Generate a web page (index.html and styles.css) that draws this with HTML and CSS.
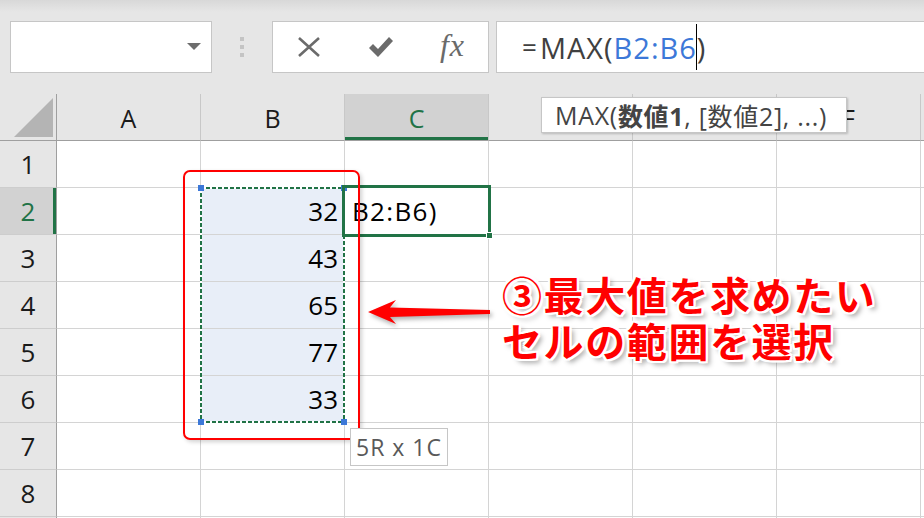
FILE: index.html
```html
<!DOCTYPE html>
<html lang="ja">
<head>
<meta charset="utf-8">
<link rel="stylesheet" href="styles.css">
</head>
<body>
<div class="toolbar">
  <div class="namebox"><span class="dd"></span></div>
  <div class="grip"><span></span><span></span><span></span></div>
  <div class="btns">
    <span class="btn"><svg width="24" height="20" viewBox="0 0 24 20"><path d="M2 1 L22 19 M22 1 L2 19" stroke="#6b6b6b" stroke-width="2.6" fill="none"/></svg></span>
    <span class="btn"><svg width="26" height="22" viewBox="0 0 26 22"><path d="M1 12 L5 8 L10 13 L21 1 L25 5 L10 21 Z" fill="#6b6b6b"/></svg></span>
    <span class="btn fx">fx</span>
  </div>
  <div class="formula"><span class="eq">=</span>MAX(<span class="ref">B2:B6</span><span class="caret"></span>)</div>
</div>

<div class="sheet">
  <div class="grid">
    <div class="corner"><span class="tri"></span></div>
    <div class="ch">A</div><div class="ch">B</div><div class="ch on">C</div><div class="ch">D</div><div class="ch">E</div><div class="ch">F</div><div class="ch last"></div>

    <div class="rh">1</div><div class="c"></div><div class="c"></div><div class="c"></div><div class="c"></div><div class="c"></div><div class="c"></div><div class="c last"></div>
    <div class="rh on">2</div><div class="c"></div><div class="c sel">32</div><div class="c txt">B2:B6)</div><div class="c"></div><div class="c"></div><div class="c"></div><div class="c last"></div>
    <div class="rh">3</div><div class="c"></div><div class="c sel">43</div><div class="c"></div><div class="c"></div><div class="c"></div><div class="c"></div><div class="c last"></div>
    <div class="rh">4</div><div class="c"></div><div class="c sel">65</div><div class="c"></div><div class="c"></div><div class="c"></div><div class="c"></div><div class="c last"></div>
    <div class="rh">5</div><div class="c"></div><div class="c sel">77</div><div class="c"></div><div class="c"></div><div class="c"></div><div class="c"></div><div class="c last"></div>
    <div class="rh">6</div><div class="c"></div><div class="c sel">33</div><div class="c"></div><div class="c"></div><div class="c"></div><div class="c"></div><div class="c last"></div>
    <div class="rh">7</div><div class="c"></div><div class="c"></div><div class="c"></div><div class="c"></div><div class="c"></div><div class="c"></div><div class="c last"></div>
    <div class="rh">8</div><div class="c"></div><div class="c"></div><div class="c"></div><div class="c"></div><div class="c"></div><div class="c"></div><div class="c last"></div>
    <div class="rh"></div><div class="c"></div><div class="c"></div><div class="c"></div><div class="c"></div><div class="c"></div><div class="c"></div><div class="c last"></div>
  </div>

  <div class="selbox"><i class="h tl"></i><i class="h tr"></i><i class="h bl"></i><i class="h br"></i></div>
  <div class="active"><i class="fill"></i></div>
  <div class="redbox"></div>
  <svg class="arrow" width="130" height="36" viewBox="362 296 130 36">
    <path d="M368 312 L396 300 L390 307.5 L490 310 L490 314 L390 317 L396 324 Z" fill="#ff0000"/>
  </svg>
  <div class="note">③最大値を求めたい<br>セルの範囲を選択</div>
  <div class="tip">MAX(<b>数値1</b>, [数値2], ...)</div>
  <div class="size">5R x 1C</div>
</div>
</body>
</html>
```

FILE: styles.css
```css
* { box-sizing: border-box; }
html, body { margin: 0; padding: 0; }
body {
  width: 924px;
  height: 518px;
  overflow: hidden;
  background: #e6e6e6;
  font-family: "Open Sans", "Noto Sans CJK JP", sans-serif;
  color: #000;
}

.toolbar {
  height: 94px;
  display: flex;
  align-items: flex-start;
  padding: 21px 0 0 10px;
  background: linear-gradient(#d8d8d8 0, #e6e6e6 12px, #e6e6e6 100%);
}
.namebox {
  width: 202px;
  height: 52px;
  background: #fff;
  border: 1px solid #c6c6c6;
  display: flex;
  justify-content: flex-end;
  align-items: center;
  padding-right: 10px;
}
.dd {
  width: 0; height: 0;
  border-left: 7px solid transparent;
  border-right: 7px solid transparent;
  border-top: 7px solid #6d6d6d;
  margin-top: -2px;
}
.grip {
  width: 60px;
  height: 52px;
  display: flex;
  flex-direction: column;
  align-items: center;
  justify-content: center;
  gap: 4px;
}
.grip span { width: 4px; height: 4px; background: #c4c4c4; }
.btns {
  width: 217px;
  height: 52px;
  background: #fff;
  border: 1px solid #c6c6c6;
  display: flex;
  align-items: center;
}
.btn {
  width: 72px;
  display: flex;
  justify-content: center;
  align-items: center;
}
.btn:first-child { width: 74px; }
.fx {
  font-family: "Liberation Serif", serif;
  font-style: italic;
  font-size: 32px;
  color: #6a6a6a;
  letter-spacing: 1px;
  margin-top: -4px;
}
.formula {
  margin-left: 7px;
  flex: 1;
  height: 52px;
  background: #fff;
  border: 1px solid #c6c6c6;
  border-right: none;
  display: flex;
  align-items: center;
  padding-left: 25px;
  font-size: 29px;
  letter-spacing: 1px;
  color: #404040;
}
.eq { font-size: 26px; margin-right: 2px; }
.ref { color: #3c78d8; }
.caret {
  display: inline-block;
  width: 1px;
  height: 46px;
  background: #000;
  margin: 0 0 0 -1px;
}

.sheet { position: relative; }
.grid {
  display: grid;
  grid-template-columns: 57px repeat(6, 144px) 1fr;
  grid-template-rows: 47px repeat(8, 47px) 10px;
  background: #fff;
}
.corner {
  background: #e6e6e6;
  border-right: 1px solid #9f9f9f;
  border-bottom: 1px solid #9f9f9f;
  position: relative;
}
.tri {
  position: absolute;
  left: 14px;
  top: 4px;
  width: 0; height: 0;
  border-left: 39px solid transparent;
  border-bottom: 39px solid #b4b4b4;
}
.ch {
  background: #e6e6e6;
  border-right: 1px solid #c8c8c8;
  border-bottom: 1px solid #9f9f9f;
  display: flex;
  align-items: center;
  justify-content: center;
  font-size: 25px;
  color: #1a1a1a;
  padding-top: 1px;
}
.ch.on {
  background: #d2d2d2;
  color: #217346;
  box-shadow: inset 0 -3px 0 #217346;
}
.ch.last { border-right: none; }
.rh {
  background: #e6e6e6;
  border-right: 1px solid #9f9f9f;
  border-bottom: 1px solid #cdcdcd;
  display: flex;
  align-items: center;
  justify-content: center;
  font-size: 26px;
  color: #1a1a1a;
}
.rh.on {
  background: #d2d2d2;
  color: #217346;
  box-shadow: inset -3px 0 0 #217346;
}
.c {
  border-right: 1px solid #d4d4d4;
  border-bottom: 1px solid #d4d4d4;
  display: flex;
  align-items: center;
  font-size: 26px;
}
.c.last { border-right: none; }
.c.sel {
  background: #e8eef8;
  justify-content: flex-end;
  padding-right: 6px;
}
.c.txt { padding-left: 7px; letter-spacing: 1.3px; }

.selbox {
  position: absolute;
  left: 200px;
  top: 93px;
  width: 145px;
  height: 236px;
  background:
    repeating-linear-gradient(90deg, #217346 0 4px, #fff 4px 6px) left top / 100% 2px no-repeat,
    repeating-linear-gradient(90deg, #217346 0 4px, #fff 4px 6px) left bottom / 100% 2px no-repeat,
    repeating-linear-gradient(180deg, #217346 0 4px, #fff 4px 6px) left top / 2px 100% no-repeat,
    repeating-linear-gradient(180deg, #217346 0 4px, #fff 4px 6px) right top / 2px 100% no-repeat;
}
.h {
  position: absolute;
  width: 6px;
  height: 6px;
  background: #3c78d8;
}
.tl { left: -2px; top: -2px; }
.tr { right: -2px; top: -2px; }
.bl { left: -2px; bottom: -2px; }
.br { right: -2px; bottom: -2px; }

.active {
  position: absolute;
  left: 342px;
  top: 91px;
  width: 149px;
  height: 52px;
  border: 3px solid #217346;
}
.fill {
  position: absolute;
  right: -5px;
  bottom: -5px;
  width: 7px;
  height: 7px;
  background: #217346;
  border: 1px solid #fff;
}

.redbox {
  position: absolute;
  left: 183px;
  top: 76px;
  width: 177px;
  height: 270px;
  border: 2px solid #ff0000;
  border-radius: 7px;
  box-shadow: 2px 2px 4px rgba(0,0,0,0.18);
}
.arrow {
  position: absolute;
  left: 362px;
  top: 202px;
  filter: drop-shadow(2px 3px 2px rgba(0,0,0,0.3));
}
.note {
  position: absolute;
  left: 502px;
  top: 177px;
  font-family: "Noto Sans CJK JP", sans-serif;
  font-weight: 700;
  font-size: 40px;
  line-height: 46px;
  letter-spacing: 1.6px;
  color: #ff0000;
  white-space: nowrap;
  text-shadow:
    2px 0 0 #fff, -2px 0 0 #fff, 0 2px 0 #fff, 0 -2px 0 #fff,
    2px 2px 0 #fff, -2px -2px 0 #fff, 2px -2px 0 #fff, -2px 2px 0 #fff,
    4px 4px 5px rgba(0,0,0,0.35);
}
.tip {
  position: absolute;
  left: 541px;
  top: 3px;
  width: 306px;
  height: 36px;
  background: #fff;
  border: 1px solid #c6c6c6;
  box-shadow: 1px 1px 2px rgba(0,0,0,0.2);
  display: flex;
  align-items: center;
  padding-left: 13px;
  font-size: 25px;
  letter-spacing: 0.7px;
  color: #444;
  white-space: nowrap;
}
.tip b { font-weight: 700; }
.size {
  position: absolute;
  left: 350px;
  top: 334px;
  width: 98px;
  height: 38px;
  background: #fff;
  border: 1px solid #c6c6c6;
  display: flex;
  align-items: center;
  justify-content: center;
  font-size: 23px;
  color: #595959;
  letter-spacing: 1px;
}
```
